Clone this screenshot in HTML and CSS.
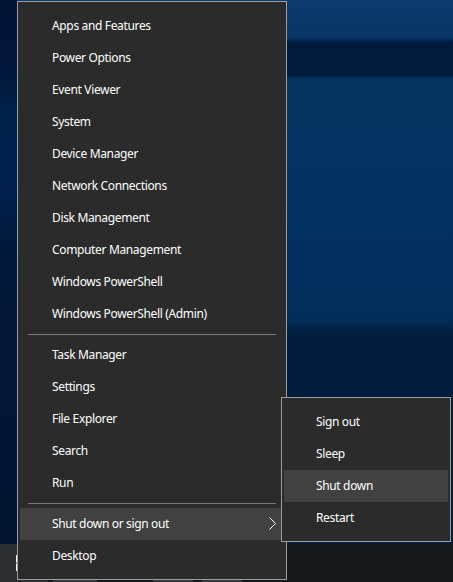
FILE: index.html
```html
<!DOCTYPE html>
<html lang="en">

<head>
    <meta charset="UTF-8">
    <meta name="viewport" content="width=device-width, initial-scale=1.0">
    <title>Quick Link Menu</title>
    <link rel="stylesheet" href="styles.css">
</head>

<body>

    <div class="desktop">
        <div class="wallpaper"></div>
        <div class="taskbar">
            <div class="start-button">
                <svg class="win-logo" width="16" height="16" viewBox="0 0 16 16">
                    <rect x="0" y="0" width="7.5" height="7.5" fill="#fff" />
                    <rect x="8.5" y="0" width="7.5" height="7.5" fill="#fff" />
                    <rect x="0" y="8.5" width="7.5" height="7.5" fill="#fff" />
                    <rect x="8.5" y="8.5" width="7.5" height="7.5" fill="#fff" />
                </svg>
            </div>
            <div class="task-slot slot-search"></div>
            <div class="task-slot slot-a"></div>
            <div class="task-slot slot-b"></div>
        </div>
    </div>

    <div class="menu">
        <div class="menu-item">Apps and Features</div>
        <div class="menu-item">Power Options</div>
        <div class="menu-item">Event Viewer</div>
        <div class="menu-item">System</div>
        <div class="menu-item">Device Manager</div>
        <div class="menu-item">Network Connections</div>
        <div class="menu-item">Disk Management</div>
        <div class="menu-item">Computer Management</div>
        <div class="menu-item">Windows PowerShell</div>
        <div class="menu-item">Windows PowerShell (Admin)</div>
        <div class="separator"></div>
        <div class="menu-item">Task Manager</div>
        <div class="menu-item">Settings</div>
        <div class="menu-item">File Explorer</div>
        <div class="menu-item">Search</div>
        <div class="menu-item">Run</div>
        <div class="separator"></div>
        <div class="menu-item active">
            <span>Shut down or sign out</span>
            <svg class="chevron" width="7" height="13" viewBox="0 0 7 13">
                <polyline points="0.5,0.5 6.5,6.5 0.5,12.5" fill="none" stroke="#fff" stroke-width="1" />
            </svg>
        </div>
        <div class="menu-item">Desktop</div>
    </div>

    <div class="menu submenu">
        <div class="menu-item">Sign out</div>
        <div class="menu-item">Sleep</div>
        <div class="menu-item active">Shut down</div>
        <div class="menu-item">Restart</div>
    </div>

</body>

</html>
```

FILE: styles.css
```css
body {
    margin: 0;
    width: 453px;
    height: 582px;
    overflow: hidden;
    font-family: "Noto Sans", "Open Sans", sans-serif;
    background: #001a38;
}

.desktop {
    display: flex;
    flex-direction: column;
    width: 453px;
    height: 582px;
}

.wallpaper {
    flex: 1;
    background:
        linear-gradient(to bottom, #001433 0, #00163a 70px, #00214a 110px, #002050 180px, #001838 260px, #001632 400px, #001430 544px) 0 0 / 17px 100% no-repeat,
        linear-gradient(to bottom, #0a3a6c 0, #073666 38px, #001c3e 42px, #001a3a 75px, #03345f 79px, #023262 200px, #012e5b 318px, #001c3d 336px, #001a37 544px);
}

.taskbar {
    display: flex;
    height: 38px;
    background: #15181b;
}

.start-button {
    display: flex;
    align-items: center;
    justify-content: center;
    width: 48px;
    background: #2b2d31;
}

.task-slot {
    align-self: flex-end;
    height: 3px;
    background: #34373b;
}

.slot-search {
    width: 44px;
    margin-left: 5px;
}

.slot-a {
    width: 40px;
    margin-left: 56px;
}

.slot-b {
    width: 40px;
    margin-left: 9px;
}

.menu {
    position: absolute;
    left: 17px;
    top: 1px;
    width: 268px;
    padding: 8px 0 7px;
    background: #2b2b2b;
    border: 1px solid #9d9d9d;
    color: #fff;
    font-size: 12px;
    letter-spacing: -0.35px;
}

.menu-item {
    display: flex;
    align-items: center;
    height: 32px;
    margin: 0 2px;
    padding: 0 8px 1px 32px;
    box-sizing: border-box;
    white-space: nowrap;
}

.menu-item.active {
    background: #414141;
}

.chevron {
    margin-left: auto;
}

.separator {
    height: 1px;
    margin: 4px 10px 4px 10px;
    background: #7c7c7c;
}

.submenu {
    left: 281px;
    top: 397px;
    width: 168px;
}
```
